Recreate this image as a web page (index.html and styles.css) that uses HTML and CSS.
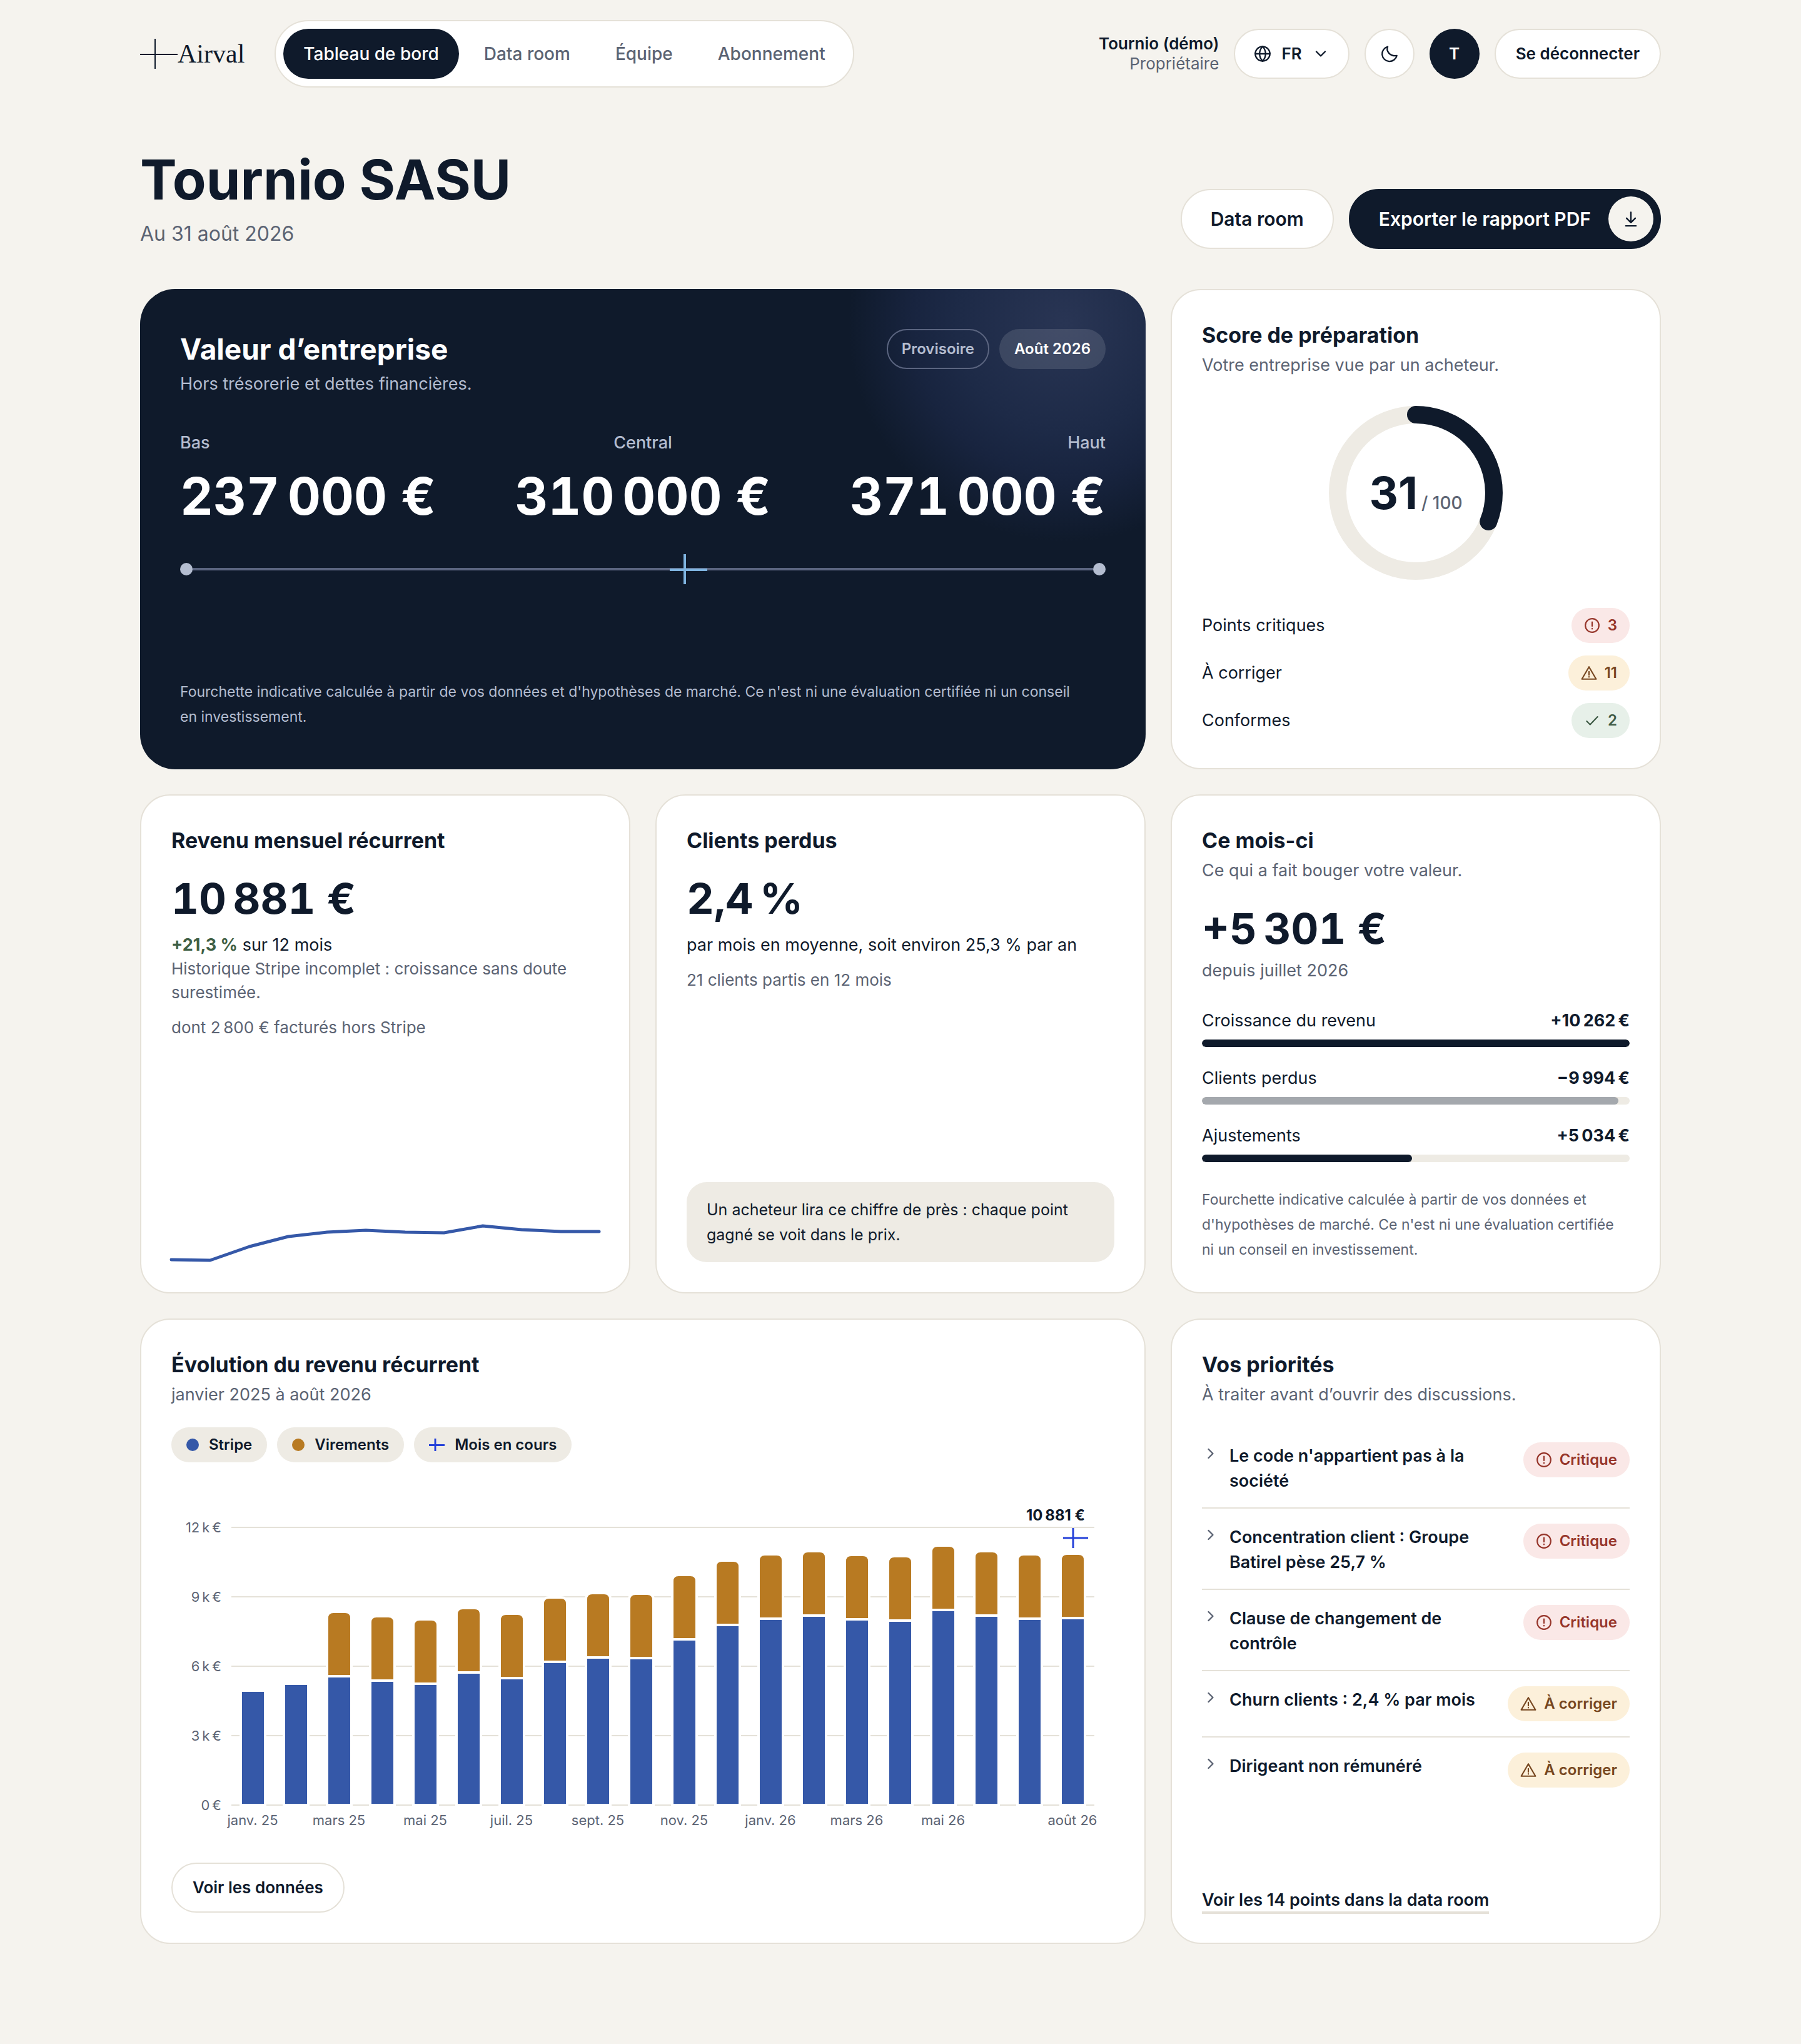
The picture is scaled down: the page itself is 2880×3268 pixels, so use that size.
FILE: index.html
```html
<!DOCTYPE html>
<html lang="fr">
<head>
<meta charset="utf-8">
<meta name="viewport" content="width=device-width, initial-scale=1">
<title>Airval – Tournio SASU</title>
<link rel="stylesheet" href="styles.css">
</head>
<body>
<svg class="sprite" aria-hidden="true">
  <symbol id="i-alert" viewBox="0 0 24 24"><circle cx="12" cy="12" r="10"/><path d="M12 7v6M12 16.5v.5"/></symbol>
  <symbol id="i-warn" viewBox="0 0 24 24"><path d="M12 3 22.5 21h-21ZM12 10v5M12 17.6v.4"/></symbol>
  <symbol id="i-check" viewBox="0 0 24 24"><path d="m4 13 5 5L20 6.500"/></symbol>
  <symbol id="i-right" viewBox="0 0 24 24"><path d="m9 6 6 6-6 6"/></symbol>
  <symbol id="i-cross" viewBox="0 0 60 48"><path d="M0 25h60M24 0v48"/></symbol>
</svg>
<div class="page">
  <header class="topbar">
    <a class="logo" href="#"><svg class="logo-mark" aria-hidden="true"><use href="#i-cross"/></svg>Airval</a>
    <nav class="nav">
      <a class="nav-link active" href="#">Tableau de bord</a>
      <a class="nav-link" href="#">Data room</a>
      <a class="nav-link" href="#">Équipe</a>
      <a class="nav-link" href="#">Abonnement</a>
    </nav>
    <div class="account">
      <div class="user"><strong>Tournio (démo)</strong><span>Propriétaire</span></div>
      <button class="btn small lang" type="button">
        <svg class="icon" viewBox="0 0 24 24" aria-hidden="true"><circle cx="12" cy="12" r="10"/><path d="M2 12h20M12 2c-5.500 6-5.500 14 0 20M12 2c5.500 6 5.500 14 0 20"/></svg>
        FR
        <svg class="icon" viewBox="0 0 24 24" aria-hidden="true"><path d="m6 9 6 6 6-6"/></svg>
      </button>
      <button class="btn round" type="button" aria-label="Thème sombre"><svg class="icon" viewBox="0 0 24 24" aria-hidden="true"><path d="M9.500 2.300C7 9 13 16 22 14.500A10.200 10.200 0 1 1 9.500 2.300Z"/></svg></button>
      <span class="avatar">T</span>
      <button class="btn small" type="button">Se déconnecter</button>
    </div>
  </header>

  <main>
    <div class="heading">
      <div>
        <h1>Tournio SASU</h1>
        <p class="date">Au 31 août 2026</p>
      </div>
      <div class="actions">
        <a class="btn large" href="#">Data room</a>
        <button class="btn large primary" type="button">Exporter le rapport PDF
          <span class="disc"><svg class="icon" viewBox="0 0 24 24" aria-hidden="true"><path d="M12 3v13M6 11l6 6 6-6M5 21.500h14"/></svg></span>
        </button>
      </div>
    </div>

    <div class="grid">
      <section class="card value wide">
        <div class="value-head">
          <div>
            <h2>Valeur d’entreprise</h2>
            <p class="sub">Hors trésorerie et dettes financières.</p>
          </div>
          <div class="tags"><span class="tag outline">Provisoire</span><span class="tag">Août 2026</span></div>
        </div>
        <dl class="range">
          <div><dt>Bas</dt><dd>237&#8239;000 €</dd></div>
          <div><dt>Central</dt><dd>310&#8239;000 €</dd></div>
          <div><dt>Haut</dt><dd>371&#8239;000 €</dd></div>
        </dl>
        <div class="scale">
          <span class="dot"></span><span class="line"></span><span class="dot"></span>
          <svg class="marker" style="left:54.5%" aria-hidden="true"><use href="#i-cross"/></svg>
        </div>
        <p class="legal">Fourchette indicative calculée à partir de vos données et d'hypothèses de marché. Ce n'est ni une évaluation certifiée ni un conseil en&nbsp;investissement.</p>
      </section>

      <section class="card">
        <h2>Score de préparation</h2>
        <p class="sub">Votre entreprise vue par un acheteur.</p>
        <div class="gauge">
          <svg viewBox="0 0 288 288" aria-hidden="true">
            <circle class="track" cx="144" cy="144" r="125"/>
            <circle class="arc" cx="144" cy="144" r="125" pathLength="100" stroke-dasharray="31 100" transform="rotate(-90 144 144)"/>
          </svg>
          <p class="score"><strong>31</strong><span>/ 100</span></p>
        </div>
        <ul class="counts">
          <li>Points critiques <span class="badge red"><svg><use href="#i-alert"/></svg>3</span></li>
          <li>À corriger <span class="badge amber"><svg><use href="#i-warn"/></svg>11</span></li>
          <li>Conformes <span class="badge green"><svg><use href="#i-check"/></svg>2</span></li>
        </ul>
      </section>

      <section class="card">
        <h2>Revenu mensuel récurrent</h2>
        <p class="figure">10&#8239;881 €</p>
        <p class="text"><strong class="up">+21,3&nbsp;%</strong> sur 12 mois</p>
        <p class="small-text">Historique Stripe incomplet : croissance sans doute surestimée.</p>
        <p class="small-text spaced">dont 2&#8239;800 € facturés hors Stripe</p>
        <svg class="spark" viewBox="0 0 684 60" preserveAspectRatio="none" aria-hidden="true"><polyline points="0,56 62,57 125,35 187,19 249,12 311,9 374,12 436,13 498,2 560,8 623,11 684,11"/></svg>
      </section>

      <section class="card">
        <h2>Clients perdus</h2>
        <p class="figure">2,4&#8239;%</p>
        <p class="text">par mois en moyenne, soit environ 25,3&nbsp;% par an</p>
        <p class="small-text spaced">21 clients partis en 12 mois</p>
        <p class="note">Un acheteur lira ce chiffre de près : chaque point gagné se voit dans le prix.</p>
      </section>

      <section class="card">
        <h2>Ce mois-ci</h2>
        <p class="sub">Ce qui a fait bouger votre valeur.</p>
        <p class="figure after-sub">+5&#8239;301 €</p>
        <p class="sub">depuis juillet 2026</p>
        <ul class="drivers">
          <li><div class="driver"><span>Croissance du revenu</span><strong>+10&#8239;262&#8239;€</strong></div><div class="bar"><div class="fill" style="width:100%"></div></div></li>
          <li><div class="driver"><span>Clients perdus</span><strong>−9&#8239;994&#8239;€</strong></div><div class="bar"><div class="fill loss" style="width:97.4%"></div></div></li>
          <li><div class="driver"><span>Ajustements</span><strong>+5&#8239;034&#8239;€</strong></div><div class="bar"><div class="fill" style="width:49.1%"></div></div></li>
        </ul>
        <p class="legal">Fourchette indicative calculée à partir de vos données et d'hypothèses de marché. Ce n'est ni une évaluation certifiée ni un conseil en investissement.</p>
      </section>

      <section class="card wide">
        <h2>Évolution du revenu récurrent</h2>
        <p class="sub">janvier 2025 à août 2026</p>
        <ul class="legend">
          <li><span class="key stripe"></span>Stripe</li>
          <li><span class="key wire"></span>Virements</li>
          <li><svg class="key-cross" aria-hidden="true"><use href="#i-cross"/></svg>Mois en cours</li>
        </ul>
        <svg class="chart" viewBox="0 0 1508 560" role="img" aria-label="Revenu récurrent par mois">
          <defs><path id="cap" d="M0 103V10Q0 0 10 0H29Q39 0 39 10V103Z"/></defs>
          <path class="gridline" d="M96 64H1476M96 175H1476M96 286H1476M96 397H1476M96 508H1476"/>
          <g class="s-stripe">
            <rect x="111" y="325" width="39" height="183"/><rect x="180" y="314" width="39" height="194"/>
            <rect x="249" y="302" width="39" height="206"/><rect x="318" y="309" width="39" height="199"/>
            <rect x="387" y="314" width="39" height="194"/><rect x="456" y="296" width="39" height="212"/>
            <rect x="525" y="305" width="39" height="203"/><rect x="594" y="279" width="39" height="229"/>
            <rect x="663" y="272" width="39" height="236"/><rect x="732" y="273" width="39" height="235"/>
            <rect x="801" y="243" width="39" height="265"/><rect x="870" y="220" width="39" height="288"/>
            <rect x="939" y="210" width="39" height="298"/><rect x="1008" y="205" width="39" height="303"/>
            <rect x="1077" y="211" width="39" height="297"/><rect x="1146" y="213" width="39" height="295"/>
            <rect x="1215" y="196" width="39" height="312"/><rect x="1284" y="205" width="39" height="303"/>
            <rect x="1353" y="210" width="39" height="298"/><rect x="1422" y="209" width="39" height="299"/>
          </g>
          <g class="s-wire">
            <use href="#cap" x="249" y="199"/><use href="#cap" x="318" y="206"/><use href="#cap" x="387" y="211"/>
            <use href="#cap" x="456" y="193"/><use href="#cap" x="525" y="202"/><use href="#cap" x="594" y="176"/>
            <use href="#cap" x="663" y="169"/><use href="#cap" x="732" y="170"/><use href="#cap" x="801" y="140"/>
            <use href="#cap" x="870" y="117"/><use href="#cap" x="939" y="107"/><use href="#cap" x="1008" y="102"/>
            <use href="#cap" x="1077" y="108"/><use href="#cap" x="1146" y="110"/><use href="#cap" x="1215" y="93"/>
            <use href="#cap" x="1284" y="102"/><use href="#cap" x="1353" y="107"/><use href="#cap" x="1422" y="106"/>
          </g>
          <g class="axis-y">
            <text x="80" y="72">12&#8239;k&#8239;€</text><text x="80" y="183">9&#8239;k&#8239;€</text><text x="80" y="294">6&#8239;k&#8239;€</text><text x="80" y="405">3&#8239;k&#8239;€</text><text x="80" y="516">0&#8239;€</text>
          </g>
          <g class="axis-x">
            <text x="130" y="540">janv. 25</text><text x="268" y="540">mars 25</text><text x="406" y="540">mai 25</text><text x="544" y="540">juil. 25</text><text x="682" y="540">sept. 25</text><text x="820" y="540">nov. 25</text><text x="958" y="540">janv. 26</text><text x="1096" y="540">mars 26</text><text x="1234" y="540">mai 26</text><text x="1441" y="540">août 26</text>
          </g>
          <path class="now" d="M1426 81h40M1442 65v32"/>
          <text class="now-label" x="1461" y="53">10&#8239;881 €</text>
        </svg>
        <button class="btn small start" type="button">Voir les données</button>
      </section>

      <section class="card">
        <h2>Vos priorités</h2>
        <p class="sub">À traiter avant d’ouvrir des discussions.</p>
        <div class="issues">
          <details><summary><svg class="chev"><use href="#i-right"/></svg><span class="issue">Le code n'appartient pas à la société</span><span class="badge red"><svg><use href="#i-alert"/></svg>Critique</span></summary></details>
          <details><summary><svg class="chev"><use href="#i-right"/></svg><span class="issue">Concentration client : Groupe Batirel pèse 25,7&nbsp;%</span><span class="badge red"><svg><use href="#i-alert"/></svg>Critique</span></summary></details>
          <details><summary><svg class="chev"><use href="#i-right"/></svg><span class="issue">Clause de changement de contrôle</span><span class="badge red"><svg><use href="#i-alert"/></svg>Critique</span></summary></details>
          <details><summary><svg class="chev"><use href="#i-right"/></svg><span class="issue">Churn clients : 2,4&nbsp;% par mois</span><span class="badge amber"><svg><use href="#i-warn"/></svg>À corriger</span></summary></details>
          <details><summary><svg class="chev"><use href="#i-right"/></svg><span class="issue">Dirigeant non rémunéré</span><span class="badge amber"><svg><use href="#i-warn"/></svg>À corriger</span></summary></details>
        </div>
        <p class="more"><a href="#">Voir les 14 points dans la data room</a></p>
      </section>
    </div>
  </main>
</div>
</body>
</html>
```
FILE: styles.css
```css
:root {
  --ink: #0f1a2b;
  --muted: #5b6373;
  --paper: #f5f3ee;
  --line: #e5e1d8;
  --soft: #eeebe4;
  --blue: #3558a8;
  --ochre: #b87a22;
  --now: #2541d9;
}
* { box-sizing: border-box; }
body {
  margin: 0;
  background: var(--paper);
  color: var(--ink);
  font: 400 27px/40px Inter, "Liberation Sans", sans-serif;
}
h1, h2, p, ul, dl, dd { margin: 0; padding: 0; }
ul { list-style: none; }
a { color: inherit; text-decoration: none; }
svg { fill: none; stroke: currentColor; flex: none; }
.sprite { display: none; }
.page { max-width: 2560px; margin: 0 auto; padding: 32px 64px 160px; }

.topbar { display: flex; align-items: center; flex-wrap: wrap; gap: 24px; }
.logo { display: flex; align-items: center; margin-right: 24px; font: 42px/48px "Liberation Serif", serif; }
.logo-mark { width: 60px; height: 48px; stroke-width: 2; }
.nav {
  display: flex; gap: 8px; padding: 12px;
  background: #fff; border: 2px solid var(--line); border-radius: 54px;
}
.nav-link { padding: 20px 32px; border-radius: 40px; color: var(--muted); font-size: 28px; font-weight: 500; }
.nav-link.active { background: var(--ink); color: #fff; }
.account { display: flex; align-items: center; gap: 24px; margin-left: auto; }
.user { display: flex; flex-direction: column; text-align: right; font-size: 26px; line-height: 32px; }
.user strong { font-weight: 600; }
.user span { color: var(--muted); }

.btn {
  display: inline-flex; align-items: center; justify-content: center; gap: 16px;
  background: #fff; border: 2px solid var(--line); border-radius: 48px;
  color: var(--ink); font: 600 26px/40px Inter, "Liberation Sans", sans-serif; cursor: pointer;
}
.btn.small { height: 80px; padding: 0 32px; }
.btn.lang { padding: 0 30px; }
.btn.round { width: 80px; height: 80px; padding: 0; }
.btn.large { height: 96px; padding: 0 46px; font-size: 30px; }
.btn.primary { background: var(--ink); border-color: var(--ink); color: #fff; padding-right: 10px; gap: 28px; }
.btn.start { align-self: flex-start; margin-top: 40px; }
.icon { width: 28px; height: 28px; stroke-width: 2; stroke-linecap: round; stroke-linejoin: round; }
.avatar {
  width: 80px; height: 80px; border-radius: 50%; background: var(--ink); color: #fff;
  font-size: 26px; font-weight: 600; line-height: 80px; text-align: center;
}
.disc {
  display: flex; align-items: center; justify-content: center;
  width: 72px; height: 72px; border-radius: 50%; background: var(--paper); color: var(--ink);
}

.heading { display: flex; align-items: flex-end; justify-content: space-between; flex-wrap: wrap; gap: 32px; margin: 100px 0 64px; }
h1 { font-size: 88px; line-height: 94px; font-weight: 700; margin-bottom: 16px; }
.date { font-size: 32px; line-height: 48px; color: var(--muted); }
.actions { display: flex; gap: 24px; }

.grid { display: grid; grid-template-columns: repeat(3, minmax(0, 1fr)); gap: 40px; }
.card {
  display: flex; flex-direction: column; padding: 48px;
  background: #fff; border: 2px solid var(--line); border-radius: 48px;
}
.wide { grid-column: span 2; }
h2 { font-size: 34px; line-height: 48px; font-weight: 700; }
.sub { margin-top: 4px; color: var(--muted); }
.legal { margin-top: auto; font-size: 23px; color: var(--muted); }

.value {
  padding: 64px; border: 0; border-radius: 56px; color: #fff;
  background: radial-gradient(circle 348px at calc(100% - 128px) 56px, #293554 0%, #1d2a47 50%, #18243f 70%, #0f1a2b 100%) #0f1a2b;
}
.value h2 { font-size: 46px; line-height: 64px; }
.value .sub, .value .legal { color: #b4bdd0; }
.value-head { display: flex; justify-content: space-between; align-items: flex-start; }
.tags { display: flex; gap: 16px; }
.tag {
  padding: 10px 22px; border: 2px solid transparent; border-radius: 32px;
  background: rgba(255, 255, 255, .12) border-box; font-size: 24px; font-weight: 600;
}
.tag.outline { background: none; border-color: #5b6580; color: #b4bdd0; }
.range { display: flex; justify-content: space-between; margin-top: 54px; }
.range div:nth-child(2) { text-align: center; }
.range div:nth-child(3) { text-align: right; }
.range dt { color: #b4bdd0; font-weight: 500; }
.range dd { margin-top: 20px; font-size: 82px; line-height: 92px; font-weight: 700; font-variant-numeric: tabular-nums; }
.scale { position: relative; display: flex; align-items: center; height: 48px; margin-top: 46px; }
.dot { width: 20px; height: 20px; border-radius: 50%; background: #b4bdd0; }
.line { flex: 1; height: 4px; background: #5b6580; }
.marker { position: absolute; width: 60px; height: 48px; margin-left: -24px; color: #7fb4e0; stroke-width: 4; }

.gauge { display: grid; place-items: center; margin: 40px 0; }
.gauge > * { grid-area: 1 / 1; }
.gauge svg { width: 288px; height: 288px; stroke-width: 28; }
.track { stroke: var(--soft); }
.arc { stroke: var(--ink); stroke-linecap: round; }
.score { display: flex; align-items: baseline; gap: 6px; padding-top: 16px; line-height: 80px; }
.score strong { font-size: 72px; font-weight: 700; }
.score span { color: var(--muted); font-size: 28px; font-weight: 500; }
.counts { display: grid; gap: 20px; }
.counts li { display: flex; align-items: center; justify-content: space-between; }
.badge {
  display: flex; align-items: center; gap: 12px; flex: none; height: 56px; padding: 0 20px;
  border-radius: 28px; font-size: 24px; font-weight: 600;
}
.badge svg { width: 26px; height: 26px; stroke-width: 2; stroke-linecap: round; stroke-linejoin: round; }
.red { background: #fae8e7; color: #96352a; }
.amber { background: #fcf0da; color: #774720; }
.green { background: #e7f0e9; color: #3f5b46; }

.figure { margin-top: 26px; font-size: 68px; line-height: 84px; font-weight: 700; font-variant-numeric: tabular-nums; }
.figure.after-sub { margin-top: 30px; }
.text { margin-top: 14px; line-height: 38px; }
.figure.after-sub + .sub { margin-top: 6px; }
.up { color: #3f5f45; font-weight: 700; }
.small-text { font-size: 26px; line-height: 38px; color: var(--muted); }
.spaced { margin-top: 18px; }
.spark { width: 100%; height: 60px; margin-top: auto; overflow: visible; stroke: var(--blue); stroke-width: 5; stroke-linecap: round; stroke-linejoin: round; }
.note { margin-top: auto; padding: 24px 32px; border-radius: 32px; background: var(--soft); font-size: 25px; }
.drivers { display: grid; gap: 30px; margin: 40px 0; }
.driver { display: flex; justify-content: space-between; margin-bottom: 10px; }
.driver strong { font-weight: 700; }
.bar { height: 12px; border-radius: 6px; background: var(--soft); overflow: hidden; }
.fill { height: 100%; border-radius: 6px; background: var(--ink); }
.loss { background: #a4a8ad; }

.legend { display: flex; flex-wrap: wrap; gap: 16px; margin-top: 32px; }
.legend li { display: flex; align-items: center; gap: 16px; height: 56px; padding: 0 24px; border-radius: 28px; background: var(--soft); font-size: 24px; font-weight: 600; }
.key { width: 20px; height: 20px; border-radius: 50%; }
.stripe { background: var(--blue); }
.wire { background: var(--ochre); }
.key-cross { width: 25px; height: 20px; color: var(--now); stroke-width: 7; }
.chart { display: block; width: 100%; margin-top: 40px; }
.chart text { stroke: none; fill: var(--muted); font-size: 22px; }
.gridline { stroke: var(--line); stroke-width: 2; }
.s-stripe, .s-wire { stroke: #fff; stroke-width: 4; }
.s-stripe { fill: var(--blue); }
.s-wire { fill: var(--ochre); }
.axis-y { text-anchor: end; }
.axis-x { text-anchor: middle; }
.now { stroke: var(--now); stroke-width: 3; }
.chart .now-label { fill: var(--ink); font-size: 24px; font-weight: 700; text-anchor: end; }

.issues { margin-top: 32px; }
.issues details + details { border-top: 2px solid var(--line); }
.issues summary { display: flex; align-items: flex-start; gap: 16px; padding: 24px 0; list-style: none; cursor: pointer; }
.issues details:not(:last-child) summary { min-height: 104px; }
.issue { flex: 1; font-weight: 600; padding-top: 2px; margin-bottom: -2px; }
.chev { width: 28px; height: 28px; margin-top: 4px; color: var(--muted); stroke-width: 2; stroke-linecap: round; stroke-linejoin: round; }
.more { margin-top: auto; font-weight: 600; }
.more a { padding-bottom: 2px; border-bottom: 4px solid var(--line); }

@media (max-width: 1800px) {
  .grid { grid-template-columns: minmax(0, 1fr); }
  .wide { grid-column: auto; }
}
```
